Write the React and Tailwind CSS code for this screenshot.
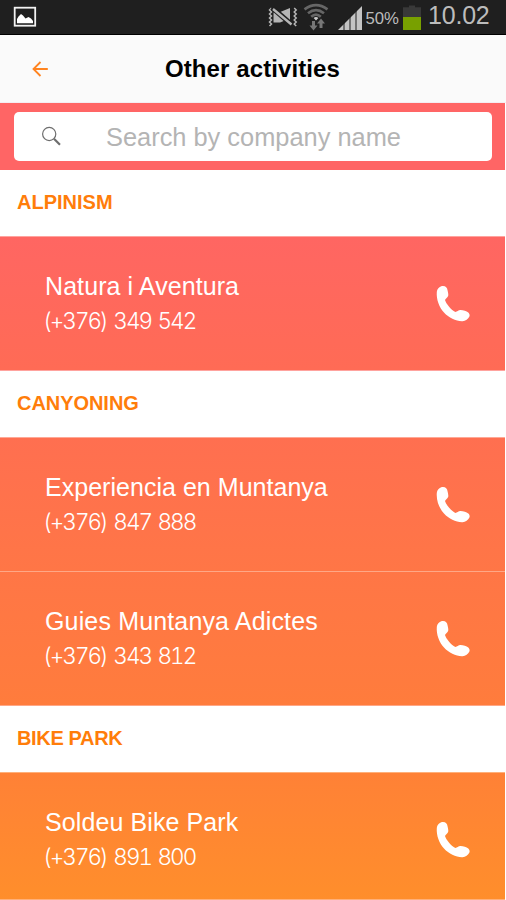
import React from "react";

const sections = [
  {
    title: "ALPINISM",
    tracking: "tracking-normal",
    items: [
      {
        name: "Natura i Aventura",
        phone: "(+376) 349 542",
        nameTracking: "tracking-[0.08px]",
        style: "h-[135px] border-y border-[#ffa39e] from-[#ff6662] to-[#ff6b55]",
      },
    ],
  },
  {
    title: "CANYONING",
    tracking: "tracking-[-0.05px]",
    items: [
      {
        name: "Experiencia en Muntanya",
        phone: "(+376) 847 888",
        nameTracking: "tracking-[0.03px]",
        style: "h-[134px] border-t border-[#ffa896] from-[#ff6f50] to-[#ff7646]",
      },
      {
        name: "Guies Muntanya Adictes",
        phone: "(+376) 343 812",
        nameTracking: "tracking-[0.15px]",
        style: "h-[135px] border-y border-[#ffa786] from-[#ff7646] to-[#ff7c3c]",
      },
    ],
  },
  {
    title: "BIKE PARK",
    tracking: "tracking-[-0.35px]",
    items: [
      {
        name: "Soldeu Bike Park",
        phone: "(+376) 891 800",
        nameTracking: "tracking-[0.1px]",
        style: "h-[128px] border-y border-[#ffb07a] from-[#ff8136] to-[#ff8e2b]",
      },
    ],
  },
];

function StatusBar() {
  return (
    <div className="flex h-[35px] shrink-0 items-start border-b border-black bg-[#1f1f1f] text-[#bcbcbc]">
      <svg className="ml-[13px] mt-[6px]" width="24" height="22" viewBox="0 0 24 22">
        <rect x="1.7" y="1.7" width="20.5" height="18" fill="#1f1f1f" stroke="#f2f2f2" strokeWidth="1.8" />
        <path d="M4 17.2V13L5.5 10.5L8 8L10 9.5L12.5 12.5L15.5 11L18 12.5L20 15V17.2Z" fill="#fff" />
      </svg>
      <svg className="ml-auto mt-[3px]" width="155" height="29" viewBox="0 0 155 29">
        {/* vibrate / mute */}
        <g fill="none" stroke="#b5b5b5" strokeWidth="1.5">
          <path d="M5.5 5L3.5 7L5.5 9L3.5 11L5.5 13L3.5 15L5.5 17L3.5 19L5.5 21L3.5 23" />
          <path d="M28.2 5L30.2 7L28.2 9L30.2 11L28.2 13L30.2 15L28.2 17L30.2 19L28.2 21L30.2 23" />
        </g>
        <path d="M7.5 9.5H13L24 5V19L19 17.5L14 19.5H7.5Z" fill="#b5b5b5" />
        <path d="M6 4.5L26 22" stroke="#1f1f1f" strokeWidth="5" />
        <path d="M7 6L25.5 21.5" stroke="#b5b5b5" strokeWidth="2.4" />
        {/* wifi */}
        <g fill="none" stroke="#666" strokeWidth="2.7">
          <path d="M38.5 6.3Q50 -2 61.5 6.3" />
          <path d="M42 10.2Q50 4 58 10.2" />
          <path d="M45.2 13.8Q50 9.5 54.8 13.8" />
        </g>
        <path d="M47.6 15Q50 13 52.4 15L50 17.5Z" fill="#ccc" />
        <path d="M46 18H49V22.5H51.5L47.5 27.5L43.5 22.5H46Z" fill="#777" />
        <path d="M53.5 25V20.5H51L55 15.5L59 20.5H56.5V25Z" fill="#777" />
        {/* signal */}
        <path d="M72 27L96 3V27Z" fill="#c4c4c4" />
        <path d="M78 27V18M84 27V12M90 27V6" stroke="#1f1f1f" strokeWidth="1" />
        <text x="99.5" y="20.5" fontSize="17" textLength="33.5" lengthAdjust="spacingAndGlyphs" fill="#bcbcbc">50%</text>
        <path d="M137 14V4.3H143V2.5H149V4.3H155V14Z" fill="#393939" />
        <path d="M137 14H155V27H137Z" fill="#78a000" />
      </svg>
      <span className="ml-[7px] mr-[14px] w-[64px] whitespace-nowrap text-[25px] leading-[30px] tracking-[-0.2px]">
        10.02
      </span>
    </div>
  );
}

function Header() {
  return (
    <header className="flex h-[68px] shrink-0 items-center border-b border-[#f4edf2] bg-[#fafafa]">
      <div className="w-[165px] pl-[32px]">
        <svg width="17" height="16" viewBox="0 0 17 16" fill="none" stroke="#ff8420" strokeWidth="1.8">
          <path d="M15.8 8H1.5M8.5 1L1.5 8L8.5 15" />
        </svg>
      </div>
      <h1 className="whitespace-nowrap text-[24px] font-bold tracking-[0.1px] text-black">Other activities</h1>
    </header>
  );
}

function SearchBar() {
  return (
    <div className="h-[67px] shrink-0 bg-[#ff6565] px-[14px] pt-[9px]">
      <div className="flex h-[49px] w-[478px] items-center rounded-[5px] bg-white">
        <svg className="ml-[27px]" width="21" height="21" viewBox="0 0 21 21" fill="none" stroke="#6e6e6e">
          <circle cx="8.2" cy="8" r="6.6" strokeWidth="1.2" />
          <path d="M13 12.8L19 18.8" strokeWidth="2.2" />
        </svg>
        <span className="ml-[44px] mt-[2px] whitespace-nowrap text-[25.4px] text-[#b4b4b4]">
          Search by company name
        </span>
      </div>
    </div>
  );
}

function PhoneIcon() {
  return (
    <svg width="34" height="37" viewBox="0 0 34 37" fill="#fff">
      <path d="M0.8 7C1.2 3.5 4 1 7 1C9.8 1 11.2 2.8 11.6 5.4C11.9 7 12.6 9 12.2 10.8C11.5 12.8 9.8 13.6 9 15C10.2 18.8 14.8 24.6 19.4 27C21.2 26.6 22.2 24.9 24.4 24.9C27.5 24.9 30.5 25.8 32.3 27.4C33.5 28.5 34 30 33.4 31.4C32.2 34 29.5 36 26.5 36.3C20 36.5 13 33 8 27.6C3.2 22.2 0.2 14.5 0.8 7Z" />
    </svg>
  );
}

function Company({ name, phone, nameTracking, style }) {
  return (
    <div className={`flex items-start justify-between bg-linear-to-b pl-[45px] pr-[35px] text-white ${style}`}>
      <div className="pt-[33px]">
        <div className={`whitespace-nowrap text-[25px] leading-[32px] ${nameTracking}`}>{name}</div>
        <div className="ml-[-2px] mt-px whitespace-nowrap font-['Inter'] text-[22.5px] font-light leading-[36px] tracking-[-2px] tabular-nums [word-spacing:2.5px]">
          {phone}
        </div>
      </div>
      <div className="pt-[48px]">
        <PhoneIcon />
      </div>
    </div>
  );
}

function App() {
  return (
    <div className="flex h-[900px] w-[506px] flex-col overflow-hidden bg-white font-['Liberation_Sans',sans-serif]">
      <StatusBar />
      <Header />
      <div className="w-[505px]">
        <SearchBar />
        {sections.map((section) => (
          <section key={section.title}>
            <h2
              className={`flex h-[66px] items-center pb-[2px] pl-[17px] text-[20px] font-bold text-[#ff7d0a] ${section.tracking}`}
            >
              {section.title}
            </h2>
            {section.items.map((item) => (
              <Company key={item.name} {...item} />
            ))}
          </section>
        ))}
      </div>
    </div>
  );
}

export default App;
